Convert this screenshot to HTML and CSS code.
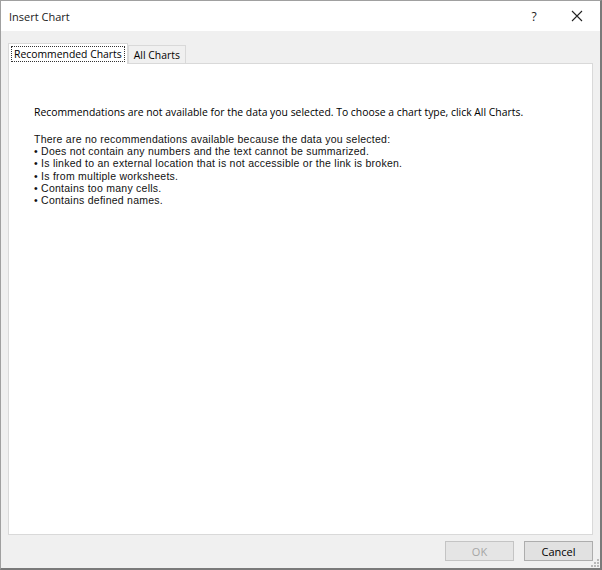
FILE: index.html
```html
<!DOCTYPE html>
<html>
<head>
<meta charset="utf-8">
<link rel="stylesheet" href="styles.css">
</head>
<body>
<div class="window">
  <div class="titlebar">
    <div class="title">Insert Chart</div>
    <div class="help">?</div>
    <div class="close">
      <svg width="12" height="12" viewBox="0 0 12 12"><path d="M1 1L11 11M11 1L1 11" stroke="#222" stroke-width="1.1" fill="none"/></svg>
    </div>
  </div>
  <div class="body">
    <div class="tabs">
      <div class="tab active"><span class="focus">Recommended Charts</span></div>
      <div class="tab">All Charts</div>
    </div>
    <div class="panel">
      <p class="msg">Recommendations are not available for the data you selected. To choose a chart type, click All Charts.</p>
      <div class="list">
        <div>There are no recommendations available because the data you selected:</div>
        <div>• Does not contain any numbers and the text cannot be summarized.</div>
        <div>• Is linked to an external location that is not accessible or the link is broken.</div>
        <div>• Is from multiple worksheets.</div>
        <div>• Contains too many cells.</div>
        <div>• Contains defined names.</div>
      </div>
    </div>
    <div class="footer">
      <button class="btn disabled">OK</button>
      <button class="btn">Cancel</button>
    </div>
    <svg class="grip" width="10" height="10" viewBox="0 0 10 10">
      <g fill="#b8b8b8">
        <rect x="7" y="1" width="2" height="2"/>
        <rect x="4" y="4" width="2" height="2"/><rect x="7" y="4" width="2" height="2"/>
        <rect x="1" y="7" width="2" height="2"/><rect x="4" y="7" width="2" height="2"/><rect x="7" y="7" width="2" height="2"/>
      </g>
    </svg>
  </div>
</div>
</body>
</html>
```
FILE: styles.css
```css
* { box-sizing: border-box; }
html, body { margin: 0; padding: 0; background: #fff; }
body { font-family: "Open Sans", "Noto Sans", "DejaVu Sans", sans-serif; font-size: 10.4px; color: #000; }
.window {
  width: 602px; height: 570px;
  border: 1px solid #8a8a8a;
  border-right-width: 2px; border-bottom-width: 2px;
  border-color: #a0a0a0 #7a7a7a #7a7a7a #a0a0a0;
  display: flex; flex-direction: column;
  background: #f0f0f0;
}
.titlebar {
  height: 30px; background: #fff;
  display: flex; align-items: center;
  padding-left: 8px;
}
.title { flex: 1; font-size: 11px; color: #1a1a1a; }
.help { width: 46px; text-align: center; font-size: 12px; color: #222; margin-right: -3px; }
.close { width: 46px; height: 30px; display: flex; align-items: center; justify-content: center; }
.body { flex: 1; position: relative; display: flex; flex-direction: column; padding: 12px 7px 0 7px; }
.tabs { display: flex; align-items: flex-end; height: 20px; position: relative; z-index: 1; }
.tab {
  height: 18px; padding: 0 5px; display: flex; align-items: center;
  border: 1px solid #d9d9d9; border-bottom: none; background: #f0f0f0;
}
.tab.active { background: #fff; padding: 0 2px; margin-bottom: -1px; height: 21px; }
.focus { border: 1px dotted #333; padding: 0 2px; line-height: 14px; }
.panel {
  height: 472px; background: #fff; border: 1px solid #d9d9d9;
  padding: 42px 0 0 25px;
}
.msg { margin: 0 0 14px 0; line-height: 13px; }
.list { font-family: "Liberation Sans", Arial, sans-serif; font-size: 10.5px; letter-spacing: 0.25px; color: #111; }
.list div { line-height: 12.2px; }
.footer { display: flex; justify-content: flex-end; gap: 10px; padding: 6px 0 0 0; }
.btn {
  width: 69px; height: 20px; font: inherit; font-size: 11px;
  background: #e1e1e1; border: 1px solid #adadad; color: #000; padding: 0;
}
.btn.disabled { background: #e5e5e5; border-color: #c4c4c4; color: #a6a6a6; }
.grip { position: absolute; right: 0; bottom: 0; }
```
